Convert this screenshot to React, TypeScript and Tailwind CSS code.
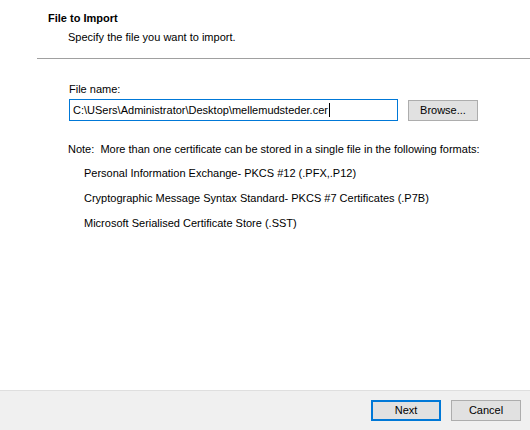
import React from 'react'

const formats = [
  'Personal Information Exchange- PKCS #12 (.PFX,.P12)',
  'Cryptographic Message Syntax Standard- PKCS #7 Certificates (.P7B)',
  'Microsoft Serialised Certificate Store (.SST)',
]

// Windows-style push button
const WinButton = ({ label, isDefault }: { label: string; isDefault?: boolean }) => (
  <button
    className={
      'h-[21px] w-[70px] bg-[#e1e1e1] text-[11px] text-black leading-none ' +
      (isDefault ? 'border-2 border-[#0078d7]' : 'border border-[#adadad]')
    }
  >
    {label}
  </button>
)

export default function App() {
  return (
    <div
      className="flex h-[430px] w-[530px] flex-col bg-white text-black"
      style={{ fontFamily: '"Liberation Sans", Arial, sans-serif' }}
    >
      {/* ヘッダー */}
      <div className="pt-[11px] text-[11px]">
        <div className="pl-[48px] font-bold leading-[14px]">File to Import</div>
        <div className="mt-[5px] pl-[68px] leading-[14px]">Specify the file you want to import.</div>
      </div>
      <div className="ml-[37px] mt-[14px] border-t border-[#a0a0a0]" />

      {/* 本体 */}
      <div className="pl-[69px] pt-[23px] text-[11px]">
        <div className="leading-[14px]">File name:</div>
        <div className="mt-[3px] flex items-center gap-[10px]">
          <div className="flex h-[22px] w-[329px] items-center border border-[#0078d7] pl-[3px] leading-none">
            <span>C:\USers\Administrator\Desktop\mellemudsteder.cer</span>
            <span className="ml-[1px] h-[14px] w-px bg-black" />
          </div>
          <WinButton label="Browse..." />
        </div>

        <div className="-ml-px mt-[21px] leading-[14px]">
          Note:&nbsp; More than one certificate can be stored in a single file in the following formats:
        </div>
        <div className="ml-[15px] mt-[10px] flex flex-col gap-[11px]">
          {formats.map((f) => (
            <div key={f} className="leading-[14px]">
              {f}
            </div>
          ))}
        </div>
      </div>

      {/* フッター */}
      <div className="mt-auto flex h-[40px] items-center justify-end gap-[10px] border-t border-[#dfdfdf] bg-[#f0f0f0] pr-[9px]">
        <WinButton label="Next" isDefault />
        <WinButton label="Cancel" />
      </div>
    </div>
  )
}
